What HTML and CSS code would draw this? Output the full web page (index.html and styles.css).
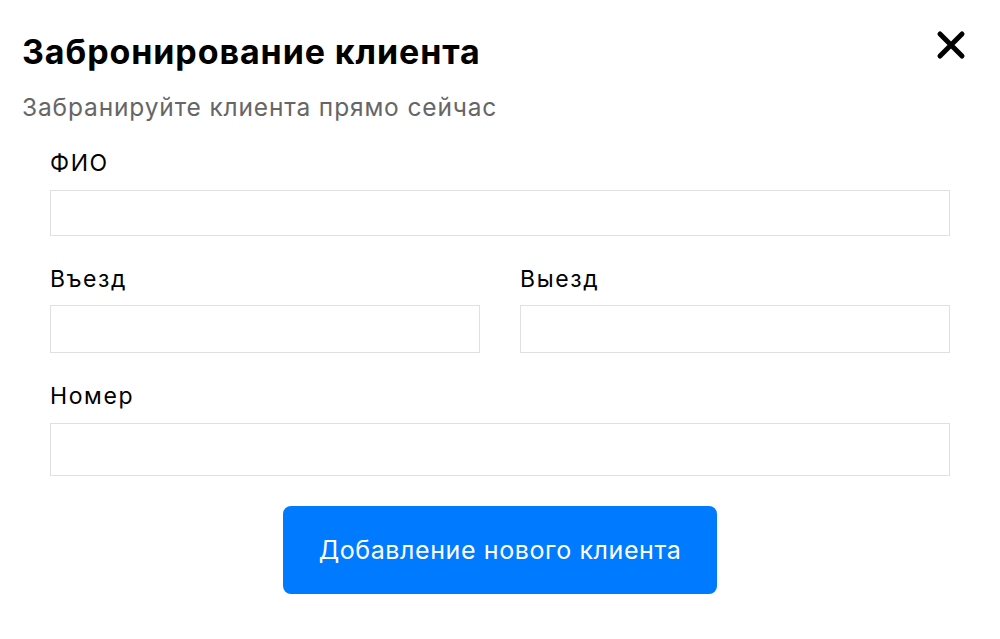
FILE: index.html
```html
<!DOCTYPE html>
<html lang="ru">
<head>
<meta charset="utf-8">
<link rel="stylesheet" href="styles.css">
</head>
<body>
<div class="modal">
  <div class="header">
    <h1 class="title">Забронирование клиента</h1>
    <button class="close" aria-label="Закрыть">
      <svg width="30" height="30" viewBox="0 0 30 30"><path d="M4 4 L26 26 M26 4 L4 26" stroke="#000" stroke-width="5" stroke-linecap="round"/></svg>
    </button>
  </div>
  <p class="subtitle">Забранируйте клиента прямо сейчас</p>
  <form class="form">
    <label class="field">
      <span class="label">ФИО</span>
      <input class="input in-full" type="text">
    </label>
    <div class="row">
      <label class="field">
        <span class="label">Въезд</span>
        <input class="input in-half" type="text">
      </label>
      <label class="field">
        <span class="label">Выезд</span>
        <input class="input in-half" type="text">
      </label>
    </div>
    <label class="field">
      <span class="label">Номер</span>
      <input class="input in-num" type="text">
    </label>
    <div class="actions">
      <button type="button" class="submit">Добавление нового клиента</button>
    </div>
  </form>
</div>
</body>
</html>
```
FILE: styles.css
```css
* { box-sizing: border-box; }
html, body { margin: 0; padding: 0; background: #fff; }
body { font-family: Inter, "Noto Sans", sans-serif; color: #000; }
.modal { width: 1000px; padding: 32px 22px 0 22px; }
.header { display: flex; justify-content: space-between; align-items: flex-start; }
.title { margin: 0; font-size: 34px; line-height: 40px; font-weight: 700; letter-spacing: 0.9px; }
.close { border: 0; background: none; padding: 0; margin: -2px 12px 0 0; width: 30px; height: 30px; display: block; cursor: pointer; }
.close svg { display: block; }
.subtitle { margin: 20px 0 0 0; font-size: 24.5px; line-height: 30px; color: #666; letter-spacing: 0.85px; }
.form { padding: 27px 28px 0 28px; display: flex; flex-direction: column; gap: 29px; }
.field { display: flex; flex-direction: column; gap: 13px; flex: 1; }
.label { font-size: 23px; line-height: 28px; letter-spacing: 1.6px; }
.row .field { gap: 12px; }
.input { display: block; width: 100%; border: 1px solid #e0e0e0; border-radius: 0; background: #fff; font: inherit; outline: none; }
.in-full { height: 46px; }
.in-half { height: 48px; }
.in-num { height: 53px; }
.row { display: flex; gap: 40px; }
.actions { display: flex; justify-content: center; }
.submit { width: 434px; height: 88px; margin-top: 1px; border: 0; border-radius: 8px; background: #007bff; color: #fff; font-family: Inter, "Noto Sans", sans-serif; font-size: 25px; letter-spacing: 0.6px; cursor: pointer; }
```
